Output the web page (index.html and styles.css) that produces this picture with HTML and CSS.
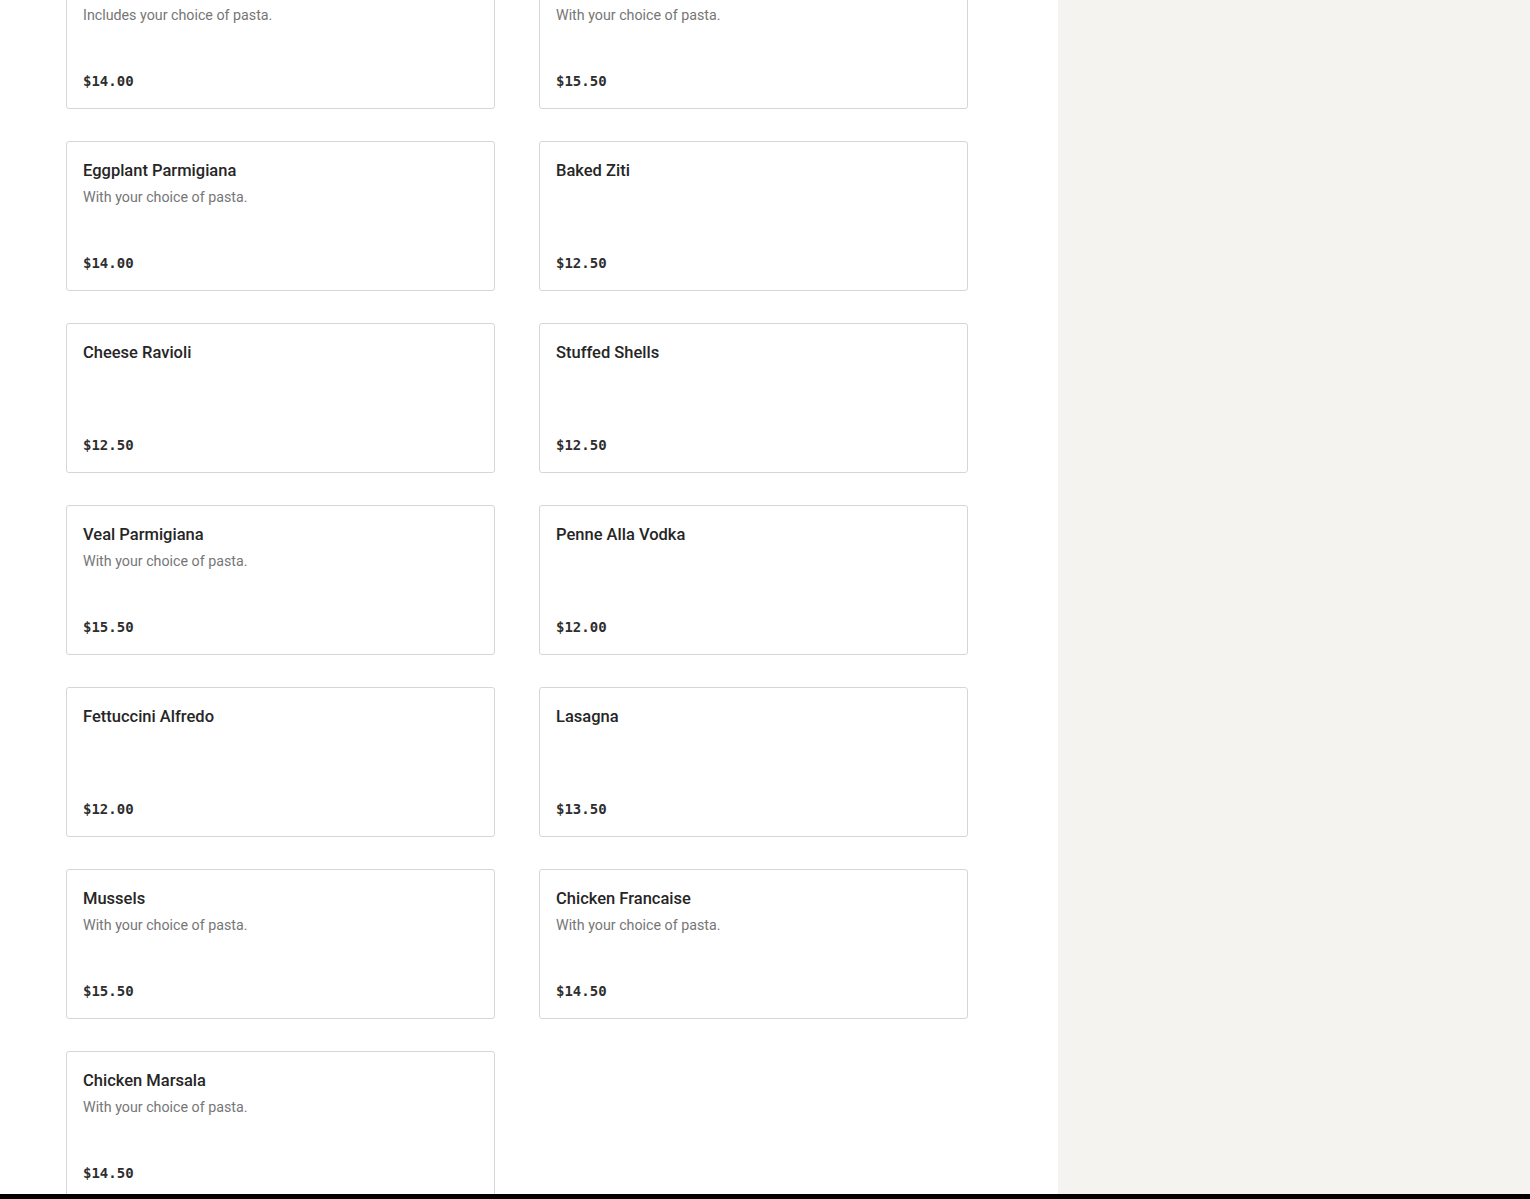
FILE: index.html
```html
<!DOCTYPE html>
<html lang="en">
<head>
<meta charset="utf-8">
<title>Menu</title>
<link rel="stylesheet" href="styles.css">
</head>
<body>
<div class="page">
  <main class="menu">
    <div class="grid">
      <div class="card"><div class="title">Chicken Parmigiana</div><div class="desc">Includes your choice of pasta.</div><div class="price">$14.00</div></div>
      <div class="card"><div class="title">Shrimp Parmigiana</div><div class="desc">With your choice of pasta.</div><div class="price">$15.50</div></div>
      <div class="card"><div class="title">Eggplant Parmigiana</div><div class="desc">With your choice of pasta.</div><div class="price">$14.00</div></div>
      <div class="card"><div class="title">Baked Ziti</div><div class="price">$12.50</div></div>
      <div class="card"><div class="title">Cheese Ravioli</div><div class="price">$12.50</div></div>
      <div class="card"><div class="title">Stuffed Shells</div><div class="price">$12.50</div></div>
      <div class="card"><div class="title">Veal Parmigiana</div><div class="desc">With your choice of pasta.</div><div class="price">$15.50</div></div>
      <div class="card"><div class="title">Penne Alla Vodka</div><div class="price">$12.00</div></div>
      <div class="card"><div class="title">Fettuccini Alfredo</div><div class="price">$12.00</div></div>
      <div class="card"><div class="title">Lasagna</div><div class="price">$13.50</div></div>
      <div class="card"><div class="title">Mussels</div><div class="desc">With your choice of pasta.</div><div class="price">$15.50</div></div>
      <div class="card"><div class="title">Chicken Francaise</div><div class="desc">With your choice of pasta.</div><div class="price">$14.50</div></div>
      <div class="card"><div class="title">Chicken Marsala</div><div class="desc">With your choice of pasta.</div><div class="price">$14.50</div></div>
    </div>
  </main>
  <aside class="side"></aside>
</div>
<div class="bottom-bar"></div>
</body>
</html>
```

FILE: styles.css
```css
html, body {
  margin: 0;
  padding: 0;
  height: 100%;
  overflow: hidden;
  background: #ffffff;
}

.page {
  display: flex;
  height: 1199px;
  overflow: hidden;
}

.menu {
  width: 1058px;
  flex: none;
  background: #ffffff;
}

.grid {
  display: grid;
  grid-template-columns: 429px 429px;
  column-gap: 44px;
  row-gap: 32px;
  padding-left: 66px;
  margin-top: -41px;
}

.card {
  box-sizing: border-box;
  height: 150px;
  border: 1px solid #d6d6d6;
  border-radius: 3px;
  padding: 17px 16px 16px;
  display: flex;
  flex-direction: column;
  font-family: Roboto, Inter, sans-serif;
}

.title {
  font-size: 16.5px;
  line-height: 24px;
  font-weight: 500;
  color: #262626;
}

.desc {
  margin-top: 3px;
  font-size: 14.25px;
  line-height: 22px;
  color: #767676;
}

.price {
  margin-top: auto;
  font-family: "DejaVu Sans Mono", monospace;
  font-size: 14px;
  line-height: 22px;
  font-weight: 700;
  color: #2e2e2e;
}

.side {
  flex: 1;
  background: #f4f3f0;
}

.bottom-bar {
  position: fixed;
  left: 0;
  right: 0;
  bottom: 0;
  height: 5px;
  background: #000000;
}
```
